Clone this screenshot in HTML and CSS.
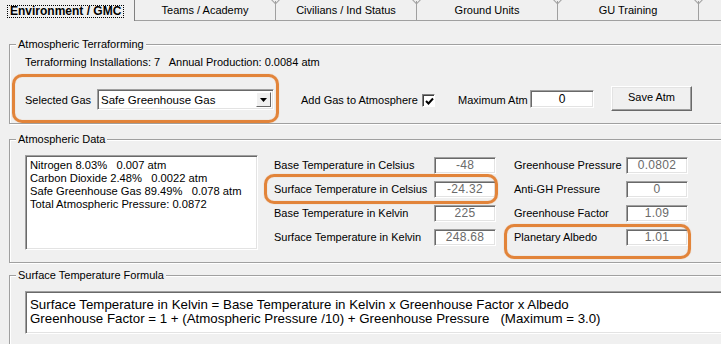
FILE: index.html
```html
<!DOCTYPE html>
<html>
<head>
<meta charset="utf-8">
<link rel="stylesheet" href="styles.css">
</head>
<body>
<div class="tabs">
  <div class="tab active"><span class="focus">Environment / GMC</span></div>
  <div class="tab">Teams / Academy</div>
  <div class="tab">Civilians / Ind Status</div>
  <div class="tab">Ground Units</div>
  <div class="tab">GU Training</div>
  <div class="tab"></div>
</div>

<div class="group g1">
  <div class="group-title">Atmospheric Terraforming</div>
  <div class="info">Terraforming Installations: 7   Annual Production: 0.0084 atm</div>
  <div class="ctrl-row">
    <span class="lbl lbl-gas">Selected Gas</span>
    <div class="combo"><span class="combo-text">Safe Greenhouse Gas</span><span class="combo-btn"><svg width="7" height="4" viewBox="0 0 7 4"><path d="M0 0H7L3.5 4Z" fill="#000"/></svg></span></div>
    <span class="lbl lbl-add">Add Gas to Atmosphere</span>
    <span class="check"><svg width="9" height="9" viewBox="0 0 9 9"><path d="M1 4 L3.5 6.5 L8 1.5" stroke="#000" stroke-width="2" fill="none"/></svg></span>
    <span class="lbl lbl-max">Maximum Atm</span>
    <div class="textbox tb-max">0</div>
    <div class="button">Save Atm</div>
  </div>
</div>

<div class="group g2">
  <div class="group-title">Atmospheric Data</div>
  <div class="data-row">
    <div class="listbox">
      <div class="li">Nitrogen 8.03%   0.007 atm</div>
      <div class="li">Carbon Dioxide 2.48%   0.0022 atm</div>
      <div class="li">Safe Greenhouse Gas 89.49%   0.078 atm</div>
      <div class="li">Total Atmospheric Pressure: 0.0872</div>
    </div>
    <div class="fields f1">
      <span class="flbl">Base Temperature in Celsius</span><div class="textbox ro">-48</div>
      <span class="flbl">Surface Temperature in Celsius</span><div class="textbox ro">-24.32</div>
      <span class="flbl">Base Temperature in Kelvin</span><div class="textbox ro">225</div>
      <span class="flbl">Surface Temperature in Kelvin</span><div class="textbox ro">248.68</div>
    </div>
    <div class="fields f2">
      <span class="flbl">Greenhouse Pressure</span><div class="textbox ro">0.0802</div>
      <span class="flbl">Anti-GH Pressure</span><div class="textbox ro">0</div>
      <span class="flbl">Greenhouse Factor</span><div class="textbox ro">1.09</div>
      <span class="flbl">Planetary Albedo</span><div class="textbox ro">1.01</div>
    </div>
  </div>
</div>

<div class="group g3">
  <div class="group-title">Surface Temperature Formula</div>
  <div class="formula">
    <div class="fl">Surface Temperature in Kelvin = Base Temperature in Kelvin x Greenhouse Factor x Albedo</div>
    <div class="fl">Greenhouse Factor = 1 + (Atmospheric Pressure /10) + Greenhouse Pressure   (Maximum = 3.0)</div>
  </div>
</div>

<div class="hl hl1"></div>
<div class="hl hl2"></div>
<div class="hl hl3"></div>
</body>
</html>
```

FILE: styles.css
```css
html, body {
  margin: 0;
  padding: 0;
}
body {
  width: 721px;
  height: 344px;
  overflow: hidden;
  position: relative;
  background: #f0f0f0;
  font-family: "Liberation Sans", Arial, sans-serif;
  font-size: 11px;
  color: #000;
}

/* tabs */
.tabs {
  display: flex;
  height: 20px;
  border-bottom: 1px solid #a0a0a0;
}
.tab {
  position: relative;
  flex: none;
  box-sizing: border-box;
  width: 141px;
  height: 19px;
  margin-top: 1px;
  line-height: 19px;
  text-align: center;
  border-right: 1px solid #a0a0a0;
  white-space: nowrap;
}
.tab::after {
  content: "";
  position: absolute;
  right: -4px;
  top: -5px;
  width: 6px;
  height: 6px;
  border-right: 1px solid #a0a0a0;
  border-bottom: 1px solid #a0a0a0;
  transform: rotate(45deg);
}
.tab.active {
  width: 135px;
  height: 21px;
  margin-top: 0;
  margin-bottom: -1px;
  background: #f0f0f0;
  border-right: 1px solid #808080;
  font-weight: bold;
  text-align: left;
  padding-left: 7px;
  z-index: 1;
}
.tab.active::after { display: none; }
.focus {
  display: inline-block;
  margin-top: 5px;
  line-height: 11px;
  padding: 0 2px;
  border: 1px dotted #000;
  font-size: 12px;
}
.tab:last-child { border-right: none; }

/* groups */
.group {
  margin-left: 9px;
  margin-right: -30px;
  border: 1px solid #a0a0a0;
  box-shadow: inset 1px 1px 0 #fff, 1px 1px 0 #fff;
  padding: 0 0 12px 15px;
}
.group-title {
  margin: -7px 0 0 -9px;
  padding: 0 2px;
  width: max-content;
  line-height: 13px;
  background: #f0f0f0;
}
.g1 { margin-top: 23px; }
.g2 { margin-top: 15px; }
.g3 { margin-top: 12px; }

.info {
  margin-top: 5px;
  line-height: 13px;
  white-space: pre;
}
.ctrl-row {
  display: flex;
  align-items: flex-start;
  margin-top: 17px;
  height: 25px;
}
.lbl {
  flex: none;
  margin-top: 8px;
  line-height: 13px;
  white-space: nowrap;
}
.lbl-gas { width: 72px; }
.lbl-add { width: 121px; margin-left: 27px; }
.lbl-max { width: 72px; margin-left: 23px; }

.combo {
  flex: none;
  box-sizing: border-box;
  width: 177px;
  height: 21px;
  margin-top: 3px;
  background: #fff;
  border: 1px solid;
  border-color: #a0a0a0 #fff #fff #a0a0a0;
  box-shadow: inset 1px 1px 0 #696969, inset -1px -1px 0 #e3e3e3;
  display: flex;
  align-items: center;
  justify-content: space-between;
  padding: 0 2px 0 3px;
  font-size: 11.5px;
}
.combo-btn {
  box-sizing: border-box;
  width: 15px;
  height: 15px;
  background: #f0f0f0;
  border: 1px solid;
  border-color: #fff #696969 #696969 #fff;
  display: flex;
  align-items: center;
  justify-content: center;
}
.check {
  flex: none;
  box-sizing: border-box;
  width: 13px;
  height: 13px;
  margin-top: 8px;
  background: #fff;
  border: 1px solid;
  border-color: #808080 #fff #fff #808080;
  box-shadow: inset 1px 1px 0 #404040;
  display: flex;
  align-items: center;
  justify-content: center;
  padding: 1px 0 0 1px;
}
.textbox {
  box-sizing: border-box;
  background: #fff;
  border: 1px solid;
  border-color: #a0a0a0 #fff #fff #a0a0a0;
  box-shadow: inset 1px 1px 0 #696969, inset -1px -1px 0 #e3e3e3;
  text-align: center;
  white-space: nowrap;
}
.tb-max {
  flex: none;
  width: 64px;
  height: 18px;
  margin-top: 4px;
  line-height: 16px;
  font-size: 12px;
}
.button {
  flex: none;
  box-sizing: border-box;
  width: 81px;
  height: 25px;
  margin-left: 17px;
  border: 1px solid;
  border-color: #fff #696969 #696969 #fff;
  box-shadow: inset -1px -1px 0 #a0a0a0, inset 1px 1px 0 #e3e3e3;
  background: #f0f0f0;
  text-align: center;
  line-height: 21px;
  font-size: 11px;
}

/* data group */
.data-row {
  display: flex;
  align-items: flex-start;
  margin-top: 9px;
}
.listbox {
  flex: none;
  box-sizing: border-box;
  width: 233px;
  height: 95px;
  background: #fff;
  border: 1px solid;
  border-color: #a0a0a0 #fff #fff #a0a0a0;
  box-shadow: inset 1px 1px 0 #696969, inset -1px -1px 0 #e3e3e3;
  padding: 3px 0 0 4px;
  line-height: 13px;
  font-size: 11.2px;
}
.li { white-space: pre; }
.fields {
  display: grid;
  grid-auto-rows: 17px;
  row-gap: 7px;
  align-items: center;
  margin-top: 2px;
}
.f1 {
  grid-template-columns: 160px 62px;
  margin-left: 16px;
}
.f2 {
  grid-template-columns: 112px 62px;
  margin-left: 18px;
}
.flbl {
  line-height: 13px;
  white-space: nowrap;
}
.textbox.ro {
  height: 17px;
  line-height: 15px;
  font-size: 12px;
  color: #6a6a6a;
  letter-spacing: 0.3px;
}

/* formula */
.formula {
  margin-top: 9px;
  height: 43px;
  box-sizing: border-box;
  background: #fff;
  border: 1px solid;
  border-color: #a0a0a0 #fff #fff #a0a0a0;
  box-shadow: inset 1px 1px 0 #696969, inset -1px -1px 0 #e3e3e3;
  padding: 6px 0 0 4px;
  font-size: 13.3px;
  line-height: 14px;
}
.fl { white-space: pre; }

/* highlight overlays */
.hl {
  position: absolute;
  box-sizing: border-box;
  border: 3px solid #e2843a;
  border-radius: 10px;
  box-shadow: 0 0 1px rgba(226, 132, 58, 0.6), inset 0 0 1px rgba(226, 132, 58, 0.6);
}
.hl1 { left: 12px; top: 74px; width: 267px; height: 49px; }
.hl2 { left: 264px; top: 174px; width: 234px; height: 30px; }
.hl3 { left: 504px; top: 224px; width: 187px; height: 35px; }
```
